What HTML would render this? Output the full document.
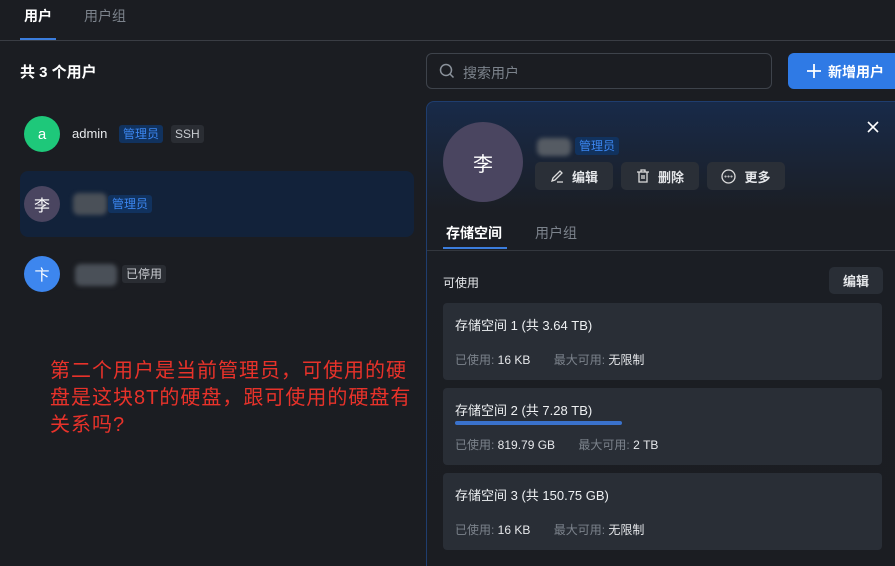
<!DOCTYPE html>
<html style="overflow:hidden"><head><meta charset="utf-8"><style>
*{margin:0;padding:0;box-sizing:border-box}
html,body{width:895px;height:566px;overflow:hidden}
body{background:#1b1d22;font-family:"Liberation Sans","Noto Sans CJK SC",sans-serif;color:#e6e8eb;position:relative;font-size:13px}
.a{position:absolute}
.tag{position:absolute;font-size:12px;padding:1px 4px;border-radius:3px;line-height:16px}
.blue{background:#11325e;color:#3b86f0}
.gray{background:#2a2d33;color:#c8cbd0}
.av{position:absolute;border-radius:50%;display:flex;align-items:center;justify-content:center;color:#fff}
.blur{position:absolute;background:#4a5058;border-radius:6px;filter:blur(2px)}
.btn{position:absolute;top:162px;height:28px;background:#2a2f37;border-radius:5px;display:flex;align-items:center;justify-content:center;gap:8px;font-size:13px;font-weight:bold;color:#e6e8eb;width:78px}
.card{position:absolute;left:443px;width:439px;height:77px;background:#292e36;border-radius:4px}
.card .t{position:absolute;left:12px;top:12px;font-size:13px;color:#eef0f2}
.card .s{position:absolute;left:12px;top:48px;font-size:12px;color:#7c838c}
.card .s b{font-weight:normal;color:#e6e8eb}
</style></head><body>
<div class="a" style="left:24px;top:6px;font-weight:bold;font-size:14px;color:#fff">用户</div>
<div class="a" style="left:84px;top:6px;font-size:14px;color:#7c838c">用户组</div>
<div class="a" style="left:20px;top:38px;width:36px;height:2px;background:#3b7ddd"></div>
<div class="a" style="left:0;top:40px;width:895px;height:1px;background:#3a3d44"></div>
<div class="a" style="left:20px;top:61px;font-size:15px;font-weight:bold;color:#fff">共 3 个用户</div>

<div class="av" style="left:24px;top:116px;width:36px;height:36px;background:#1ec87a;font-size:15px">a</div>
<div class="a" style="left:72px;top:126px;font-size:13px;color:#e6e8eb">admin</div>
<div class="tag blue" style="left:119px;top:125px">管理员</div>
<div class="tag gray" style="left:171px;top:125px">SSH</div>

<div class="a" style="left:20px;top:171px;width:394px;height:66px;background:#12223a;border-radius:8px"></div>
<div class="av" style="left:24px;top:186px;width:36px;height:36px;background:#4a4560;font-size:16px">李</div>
<div class="blur" style="left:73px;top:193px;width:34px;height:22px"></div>
<div class="tag blue" style="left:108px;top:195px">管理员</div>

<div class="av" style="left:24px;top:256px;width:36px;height:36px;background:#3d86ee;font-size:15px">卞</div>
<div class="blur" style="left:75px;top:264px;width:42px;height:22px"></div>
<div class="tag gray" style="left:122px;top:265px">已停用</div>

<div class="a" style="left:50px;top:358px;width:366px;font-size:20px;letter-spacing:1px;line-height:27px;color:#e8322a">第二个用户是当前管理员，可使用的硬盘是这块8T的硬盘，跟可使用的硬盘有关系吗?</div>

<div class="a" style="left:426px;top:53px;width:346px;height:36px;border:1px solid #3e434b;border-radius:6px"></div>
<svg class="a" style="left:439px;top:63px" width="16" height="16" viewBox="0 0 16 16" fill="none" stroke="#8b929b" stroke-width="1.5"><circle cx="7" cy="7" r="5.5"/><path d="M11 11l3.5 3.5"/></svg>
<div class="a" style="left:463px;top:63px;font-size:14px;color:#7c838c">搜索用户</div>
<div class="a" style="left:788px;top:53px;width:120px;height:36px;background:#2f7ae5;border-radius:6px"></div>
<svg class="a" style="left:806px;top:63px" width="16" height="16" viewBox="0 0 16 16" stroke="#fff" stroke-width="1.8"><path d="M8 1v14M1 8h14"/></svg>
<div class="a" style="left:828px;top:62px;font-size:14px;font-weight:bold;color:#fff">新增用户</div>

<div class="a" style="left:426px;top:101px;width:480px;height:480px;border:1px solid #1f3d6e;border-radius:8px;background:linear-gradient(#182a49 0,#1b1e24 110px,#1b1d22 100%)"></div>
<svg class="a" style="left:867px;top:121px" width="12" height="12" viewBox="0 0 12 12" stroke="#fff" stroke-width="1.6"><path d="M1 1l10 10M11 1L1 11"/></svg>
<div class="av" style="left:443px;top:122px;width:80px;height:80px;background:#4a4560;font-size:20px">李</div>
<div class="blur" style="left:537px;top:138px;width:34px;height:18px;background:#555b63"></div>
<div class="tag blue" style="left:575px;top:137px">管理员</div>
<div class="btn" style="left:535px"><svg width="14" height="14" viewBox="0 0 14 14" fill="none" stroke="#ddd" stroke-width="1.3"><path d="M2 12l1-3 7-7 2 2-7 7zM7 13h6"/></svg>编辑</div>
<div class="btn" style="left:621px"><svg width="14" height="14" viewBox="0 0 14 14" fill="none" stroke="#ddd" stroke-width="1.3"><path d="M1 3h12M5 3V1h4v2M3 3v10h8V3M6 6v4M8 6v4"/></svg>删除</div>
<div class="btn" style="left:707px"><svg width="15" height="15" viewBox="0 0 15 15" fill="none" stroke="#ddd" stroke-width="1.3"><circle cx="7.5" cy="7.5" r="6.5"/><circle cx="4.5" cy="7.5" r=".4"/><circle cx="7.5" cy="7.5" r=".4"/><circle cx="10.5" cy="7.5" r=".4"/></svg>更多</div>

<div class="a" style="left:446px;top:223px;font-size:14px;font-weight:bold;color:#fff">存储空间</div>
<div class="a" style="left:535px;top:223px;font-size:14px;color:#7c838c">用户组</div>
<div class="a" style="left:443px;top:247px;width:64px;height:2px;background:#3b7ddd"></div>
<div class="a" style="left:427px;top:250px;width:468px;height:1px;background:#33373e"></div>
<div class="a" style="left:443px;top:274px;font-size:12px;color:#e6e8eb">可使用</div>
<div class="a" style="left:829px;top:267px;width:54px;height:27px;background:#292e36;border-radius:5px;font-size:13px;font-weight:bold;display:flex;align-items:center;justify-content:center">编辑</div>

<div class="card" style="top:303px"><div class="t">存储空间 1 (共 3.64 TB)</div><div class="s">已使用: <b>16 KB</b>&nbsp;&nbsp;&nbsp;&nbsp;&nbsp;&nbsp;&nbsp;最大可用: <b>无限制</b></div></div>
<div class="card" style="top:388px"><div class="t">存储空间 2 (共 7.28 TB)</div><div class="a" style="left:12px;top:33px;width:167px;height:4px;border-radius:2px;background:#3a72cc"></div><div class="s">已使用: <b>819.79 GB</b>&nbsp;&nbsp;&nbsp;&nbsp;&nbsp;&nbsp;&nbsp;最大可用: <b>2 TB</b></div></div>
<div class="card" style="top:473px"><div class="t">存储空间 3 (共 150.75 GB)</div><div class="s">已使用: <b>16 KB</b>&nbsp;&nbsp;&nbsp;&nbsp;&nbsp;&nbsp;&nbsp;最大可用: <b>无限制</b></div></div>
</body></html>
